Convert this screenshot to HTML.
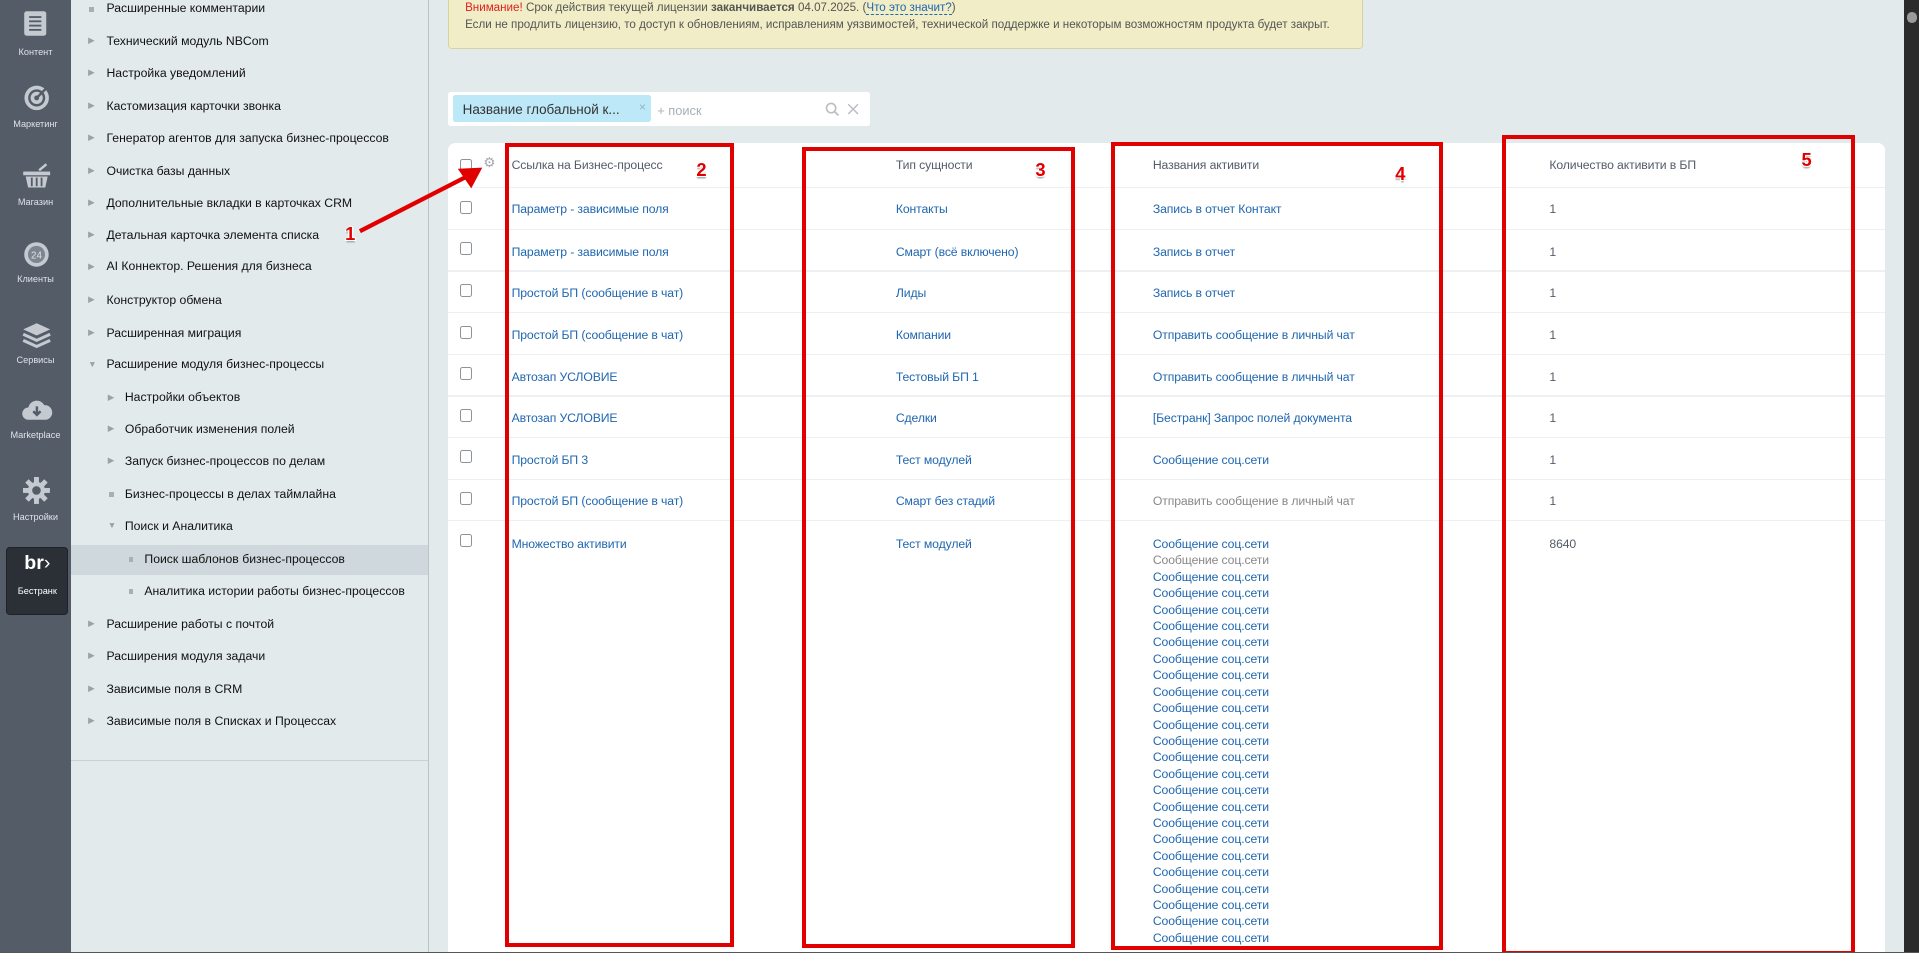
<!DOCTYPE html>
<html><head><meta charset="utf-8">
<style>
html,body{margin:0;padding:0;overflow:hidden;background:#fff}
#root{zoom:1.22385;width:1568px;height:785.2px;position:relative;overflow:hidden;font-family:"Liberation Sans",Arial,sans-serif;background:#e3eaec}
.a{position:absolute;white-space:nowrap}
#lb{left:0;top:0;width:58px;height:778px;background:#545c68}
.li{position:absolute;left:0;width:58px;text-align:center;color:#dfe3e8;font-size:7.5px}
#menu{left:58px;top:0;width:292px;height:778px;background:#e3eaec;border-right:1px solid #b9c3c8}
.mi{position:absolute;font-size:10px;color:#111}
.mk{position:absolute;font-size:7px;color:#9aa2a8}
.sq{position:absolute;width:4px;height:4px;background:#a9b0b5}
.lk{color:#2067b0}
.cb{position:absolute;left:376px;width:8px;height:9px;border:1px solid #8c9399;border-radius:2px;background:#fff}
.rl{position:absolute;left:366px;width:1174px;height:1px;background:#edf0f2}
.tc{position:absolute;font-size:10px;letter-spacing:-0.1px;font-family:"Liberation Sans Narrow","Liberation Sans",sans-serif}
.rb{position:absolute;border:4px solid #e00000;box-sizing:border-box}
.num{position:absolute;color:#e00000;font-weight:bold;font-size:15px;text-shadow:1px 1px 0 #fff,-1px 1px 0 #fff,1px -1px 0 #fff,0 2px 1px #aaa;font-family:"Liberation Sans",sans-serif}
</style></head><body>
<div id="root">
<div class="a" id="lb"></div>
<svg class="a" style="left:19px;top:8px" width="20" height="22" viewBox="0 0 20 22"><rect x="1" y="1" width="18" height="20" rx="2" fill="#c5cad0"/><rect x="5" y="5" width="10" height="1.5" fill="#545c68"/><rect x="5" y="8.5" width="10" height="1.5" fill="#545c68"/><rect x="5" y="12" width="10" height="1.5" fill="#545c68"/><rect x="5" y="15.5" width="10" height="1.5" fill="#545c68"/></svg>
<div class="li" style="top:38px">Контент</div>
<svg class="a" style="left:18px;top:67px" width="24" height="24" viewBox="0 0 24 24"><circle cx="12" cy="13" r="10" fill="#c5cad0"/><circle cx="12" cy="13" r="6" fill="none" stroke="#545c68" stroke-width="2"/><circle cx="12" cy="13" r="2" fill="#545c68"/><path d="M13 12 L21 4" stroke="#545c68" stroke-width="2"/></svg>
<div class="li" style="top:97px">Маркетинг</div>
<svg class="a" style="left:18px;top:133px" width="24" height="22" viewBox="0 0 24 22"><path d="M14 6 L20 1" stroke="#c5cad0" stroke-width="2"/><rect x="1" y="7" width="22" height="3" fill="#c5cad0"/><path d="M3 11 H21 L19 20 H5 Z" fill="#c5cad0"/><path d="M8 12v7M12 12v7M16 12v7" stroke="#545c68" stroke-width="1.5"/></svg>
<div class="li" style="top:161px">Магазин</div>
<svg class="a" style="left:19px;top:197px" width="22" height="22" viewBox="0 0 22 22"><circle cx="11" cy="11" r="10" fill="#c5cad0"/><circle cx="11" cy="11" r="7" fill="#7d8590"/><text x="11" y="14.5" font-size="8" text-anchor="middle" fill="#dfe3e8" font-family="Liberation Sans">24</text></svg>
<div class="li" style="top:224px">Клиенты</div>
<svg class="a" style="left:18px;top:263px" width="24" height="22" viewBox="0 0 24 22"><path d="M12 1 L23 6 L12 11 L1 6Z" fill="#c5cad0"/><path d="M1 10 L12 15 L23 10" stroke="#c5cad0" stroke-width="2.5" fill="none"/><path d="M1 15 L12 20 L23 15" stroke="#c5cad0" stroke-width="2.5" fill="none"/></svg>
<div class="li" style="top:290px">Сервисы</div>
<svg class="a" style="left:17px;top:326px" width="26" height="18" viewBox="0 0 26 18"><path d="M6 17 A5 5 0 0 1 6 7 A7 7 0 0 1 19 5 A6 6 0 0 1 20 17Z" fill="#c5cad0"/><path d="M13 6v7M10 10l3 3 3-3" stroke="#545c68" stroke-width="2" fill="none"/></svg>
<div class="li" style="top:351px">Marketplace</div>
<svg class="a" style="left:19px;top:390px" width="22" height="22" viewBox="0 0 22 22"><g fill="#c5cad0"><circle cx="11" cy="11" r="7"/><rect x="9" y="0" width="4" height="22"/><rect x="0" y="9" width="22" height="4"/><rect x="9" y="0" width="4" height="22" transform="rotate(45 11 11)"/><rect x="9" y="0" width="4" height="22" transform="rotate(-45 11 11)"/></g><circle cx="11" cy="11" r="3.5" fill="#545c68"/></svg>
<div class="li" style="top:418px">Настройки</div>
<div class="a" style="left:5px;top:447px;width:49px;height:54px;background:#2b2f36;border-radius:3px;border:1px solid #1f2227"></div>
<div class="a" style="left:5px;top:451px;width:51px;text-align:center;color:#fff;font-weight:bold;font-size:16px">br<span style="font-weight:normal">›</span></div>
<div class="li" style="top:479px;left:5px;width:51px;color:#fff">Бестранк</div>

<div class="a" id="menu"></div>
<div class="a" style="left:58px;top:445px;width:292px;height:25px;background:#cfd8dc"></div>
<div class="a" style="left:58px;top:621px;width:292px;height:1px;background:#c8d2d6"></div>
<div class="sq" style="left:73px;top:6px"></div><div class="mi" style="left:87px;top:1px">Расширенные комментарии</div>
<div class="mk" style="left:72px;top:29px">▶</div><div class="mi" style="left:87px;top:28px">Технический модуль NBCom</div>
<div class="mk" style="left:72px;top:55px">▶</div><div class="mi" style="left:87px;top:54px">Настройка уведомлений</div>
<div class="mk" style="left:72px;top:82px">▶</div><div class="mi" style="left:87px;top:81px">Кастомизация карточки звонка</div>
<div class="mk" style="left:72px;top:108px">▶</div><div class="mi" style="left:87px;top:107px">Генератор агентов для запуска бизнес-процессов</div>
<div class="mk" style="left:72px;top:135px">▶</div><div class="mi" style="left:87px;top:134px">Очистка базы данных</div>
<div class="mk" style="left:72px;top:161px">▶</div><div class="mi" style="left:87px;top:160px">Дополнительные вкладки в карточках CRM</div>
<div class="mk" style="left:72px;top:187px">▶</div><div class="mi" style="left:87px;top:186px">Детальная карточка элемента списка</div>
<div class="mk" style="left:72px;top:213px">▶</div><div class="mi" style="left:87px;top:212px">AI Коннектор. Решения для бизнеса</div>
<div class="mk" style="left:72px;top:240px">▶</div><div class="mi" style="left:87px;top:239px">Конструктор обмена</div>
<div class="mk" style="left:72px;top:267px">▶</div><div class="mi" style="left:87px;top:266px">Расширенная миграция</div>
<div class="mk" style="left:72px;top:293px">▼</div><div class="mi" style="left:87px;top:292px">Расширение модуля бизнес-процессы</div>
<div class="mk" style="left:88px;top:320px">▶</div><div class="mi" style="left:102px;top:319px">Настройки объектов</div>
<div class="mk" style="left:88px;top:346px">▶</div><div class="mi" style="left:102px;top:345px">Обработчик изменения полей</div>
<div class="mk" style="left:88px;top:372px">▶</div><div class="mi" style="left:102px;top:371px">Запуск бизнес-процессов по делам</div>
<div class="sq" style="left:89px;top:402px"></div><div class="mi" style="left:102px;top:398px">Бизнес-процессы в делах таймлайна</div>
<div class="mk" style="left:88px;top:425px">▼</div><div class="mi" style="left:102px;top:424px">Поиск и Аналитика</div>
<div class="sq" style="left:105px;top:455px"></div><div class="mi" style="left:118px;top:451px">Поиск шаблонов бизнес-процессов</div>
<div class="sq" style="left:105px;top:481px"></div><div class="mi" style="left:118px;top:477px">Аналитика истории работы бизнес-процессов</div>
<div class="mk" style="left:72px;top:505px">▶</div><div class="mi" style="left:87px;top:504px">Расширение работы с почтой</div>
<div class="mk" style="left:72px;top:531px">▶</div><div class="mi" style="left:87px;top:530px">Расширения модуля задачи</div>
<div class="mk" style="left:72px;top:558px">▶</div><div class="mi" style="left:87px;top:557px">Зависимые поля в CRM</div>
<div class="mk" style="left:72px;top:584px">▶</div><div class="mi" style="left:87px;top:583px">Зависимые поля в Списках и Процессах</div>

<div class="a" style="left:366px;top:-5px;width:746px;height:43px;background:#f1edc6;border:1px solid #d9d2a0;border-radius:3px"></div>
<div class="a" style="left:380px;top:1px;font-size:9.5px;color:#555"><span style="color:#e02020">Внимание!</span> Срок действия текущей лицензии <b>заканчивается</b> 04.07.2025. (<span style="color:#2067b0;border-bottom:1px dashed #2067b0">Что это значит?</span>)</div>
<div class="a" style="left:380px;top:15px;font-size:9.5px;color:#555">Если не продлить лицензию, то доступ к обновлениям, исправлениям уязвимостей, технической поддержке и некоторым возможностям продукта будет закрыт.</div>

<div class="a" style="left:366px;top:75px;width:345px;height:28px;background:#fff;border-radius:2px"></div>
<div class="a" style="left:370px;top:78px;width:162px;height:22px;background:#bde8f7;border-radius:2px"></div>
<div class="a" style="left:378px;top:83px;font-size:11px;color:#333">Название глобальной к...</div>
<div class="a" style="left:522px;top:82px;font-size:10px;color:#8fb6c8">×</div>
<div class="a" style="left:537px;top:84px;font-size:10.5px;color:#a8b0b5">+ поиск</div>
<svg class="a" style="left:674px;top:83px" width="12" height="12" viewBox="0 0 12 12"><circle cx="5" cy="5" r="3.8" fill="none" stroke="#b8bec3" stroke-width="1.3"/><path d="M8 8l3 3" stroke="#b8bec3" stroke-width="1.4"/></svg>
<svg class="a" style="left:692px;top:84px" width="10" height="10" viewBox="0 0 10 10"><path d="M1 1l8 8M9 1l-8 8" stroke="#b8bec3" stroke-width="1.2"/></svg>

<div class="a" style="left:366px;top:117px;width:1174px;height:670px;background:#fff;border-radius:6px 6px 0 0"></div>
<div class="rl" style="top:153px"></div><div class="rl" style="top:187px"></div><div class="rl" style="top:221px"></div><div class="rl" style="top:255px"></div><div class="rl" style="top:289px"></div><div class="rl" style="top:323px"></div><div class="rl" style="top:357px"></div><div class="rl" style="top:391px"></div><div class="rl" style="top:425px"></div>
<div class="cb" style="top:130px"></div>
<div class="a" style="left:395px;top:127px;font-size:11px;color:#a0a7ad">⚙</div>
<div class="cb" style="top:164px"></div><div class="cb" style="top:198px"></div><div class="cb" style="top:232px"></div><div class="cb" style="top:266px"></div><div class="cb" style="top:300px"></div><div class="cb" style="top:334px"></div><div class="cb" style="top:368px"></div><div class="cb" style="top:402px"></div><div class="cb" style="top:436px"></div>

<div class="tc" style="left:418px;top:129px;color:#535c69">Ссылка на Бизнес-процесс</div>
<div class="tc" style="left:732px;top:129px;color:#535c69">Тип сущности</div>
<div class="tc" style="left:942px;top:129px;color:#535c69">Названия активити</div>
<div class="tc" style="left:1266px;top:129px;color:#535c69">Количество активити в БП</div>

<div class="tc lk" style="left:418px;top:165px">Параметр - зависимые поля</div><div class="tc lk" style="left:732px;top:165px">Контакты</div><div class="tc lk" style="left:942px;top:165px">Запись в отчет Контакт</div><div class="tc" style="left:1266px;top:165px;color:#535c69">1</div>
<div class="tc lk" style="left:418px;top:200px">Параметр - зависимые поля</div><div class="tc lk" style="left:732px;top:200px">Смарт (всё включено)</div><div class="tc lk" style="left:942px;top:200px">Запись в отчет</div><div class="tc" style="left:1266px;top:200px;color:#535c69">1</div>
<div class="tc lk" style="left:418px;top:234px">Простой БП (сообщение в чат)</div><div class="tc lk" style="left:732px;top:234px">Лиды</div><div class="tc lk" style="left:942px;top:234px">Запись в отчет</div><div class="tc" style="left:1266px;top:234px;color:#535c69">1</div>
<div class="tc lk" style="left:418px;top:268px">Простой БП (сообщение в чат)</div><div class="tc lk" style="left:732px;top:268px">Компании</div><div class="tc lk" style="left:942px;top:268px">Отправить сообщение в личный чат</div><div class="tc" style="left:1266px;top:268px;color:#535c69">1</div>
<div class="tc lk" style="left:418px;top:302px">Автозап УСЛОВИЕ</div><div class="tc lk" style="left:732px;top:302px">Тестовый БП 1</div><div class="tc lk" style="left:942px;top:302px">Отправить сообщение в личный чат</div><div class="tc" style="left:1266px;top:302px;color:#535c69">1</div>
<div class="tc lk" style="left:418px;top:336px">Автозап УСЛОВИЕ</div><div class="tc lk" style="left:732px;top:336px">Сделки</div><div class="tc lk" style="left:942px;top:336px">[Бестранк] Запрос полей документа</div><div class="tc" style="left:1266px;top:336px;color:#535c69">1</div>
<div class="tc lk" style="left:418px;top:370px">Простой БП 3</div><div class="tc lk" style="left:732px;top:370px">Тест модулей</div><div class="tc lk" style="left:942px;top:370px">Сообщение соц.сети</div><div class="tc" style="left:1266px;top:370px;color:#535c69">1</div>
<div class="tc lk" style="left:418px;top:404px">Простой БП (сообщение в чат)</div><div class="tc lk" style="left:732px;top:404px">Смарт без стадий</div><div class="tc" style="left:942px;top:404px;color:#888">Отправить сообщение в личный чат</div><div class="tc" style="left:1266px;top:404px;color:#535c69">1</div>
<div class="tc lk" style="left:418px;top:439px">Множество активити</div><div class="tc lk" style="left:732px;top:439px">Тест модулей</div><div class="tc" style="left:1266px;top:439px;color:#535c69">8640</div>
<div class="tc lk" style="left:942px;top:438px;line-height:13.4px;white-space:normal;width:200px">Сообщение соц.сети<br><span style="color:#888">Сообщение соц.сети</span><br>Сообщение соц.сети<br>Сообщение соц.сети<br>Сообщение соц.сети<br>Сообщение соц.сети<br>Сообщение соц.сети<br>Сообщение соц.сети<br>Сообщение соц.сети<br>Сообщение соц.сети<br>Сообщение соц.сети<br>Сообщение соц.сети<br>Сообщение соц.сети<br>Сообщение соц.сети<br>Сообщение соц.сети<br>Сообщение соц.сети<br>Сообщение соц.сети<br>Сообщение соц.сети<br>Сообщение соц.сети<br>Сообщение соц.сети<br>Сообщение соц.сети<br>Сообщение соц.сети<br>Сообщение соц.сети<br>Сообщение соц.сети<br>Сообщение соц.сети</div>

<div class="rb" style="left:413px;top:117px;width:187px;height:657px"></div>
<div class="rb" style="left:655px;top:120px;width:223px;height:655px"></div>
<div class="rb" style="left:908px;top:116px;width:271px;height:660px"></div>
<div class="rb" style="left:1227px;top:110px;width:289px;height:670px"></div>
<div class="num" style="left:569px;top:130px">2</div>
<div class="num" style="left:846px;top:130px">3</div>
<div class="num" style="left:1140px;top:133px">4</div>
<div class="num" style="left:1472px;top:122px">5</div>
<div class="num" style="left:282px;top:182px">1</div>
<svg class="a" style="left:290px;top:130px" width="110" height="65" viewBox="0 0 110 65"><path d="M4 59 L92 14" stroke="#e00000" stroke-width="3.5"/><path d="M104 7 L84 8 L95 24 Z" fill="#e00000"/></svg>

<div class="a" style="left:0;top:777.5px;width:1568px;height:1px;background:#555"></div>
<div class="a" style="left:0;top:778.5px;width:1568px;height:8px;background:#fff"></div>
<div class="a" style="left:1556px;top:0;width:12px;height:778px;background:#2b2b2b"></div>
<div class="a" style="left:1558px;top:10px;width:8px;height:9px;background:#9a9a9a;border-radius:4px"></div>
</div>
</body></html>
